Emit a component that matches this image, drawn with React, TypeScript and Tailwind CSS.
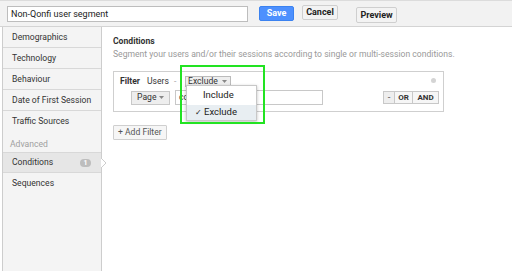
import React from "react";

const Arrow = () => (
  <svg width="5" height="3" viewBox="0 0 5 3" className="inline-block">
    <path d="M0 0 L5 0 L2.5 3 Z" fill="#888" />
  </svg>
);

export default function App() {
  const items = ["Demographics", "Technology", "Behaviour", "Date of First Session", "Traffic Sources"];
  return (
    <div
      className="relative w-[512px] h-[271px] overflow-hidden bg-white text-[#333]"
      style={{ fontFamily: "Roboto, 'Liberation Sans', Arial, sans-serif" }}
    >
      {/* top bar */}
      <div className="h-[27px] bg-[#f2f2f2] border-t border-[#dcdcdc] border-b border-b-[#d4d4d4] flex items-start">
        <div className="mt-[5px] ml-[7px] w-[241px] h-[16px] border border-[#bdbdbd] bg-white text-[9px] leading-[14px] px-[3px] text-[#222]">
          Non-Qonfi user segment
        </div>
        <button className="mt-[5px] ml-[11px] w-[35px] h-[15px] rounded-[2px] bg-[#4d90fe] border border-[#3b82f0] text-white text-[9px] font-bold leading-[13px]">
          Save
        </button>
        <button className="mt-[4px] ml-[8px] w-[36px] h-[15px] rounded-[2px] bg-[#f3f3f3] border border-[#cfcfcf] text-[#222] text-[9px] font-bold leading-[13px]">
          Cancel
        </button>
        <button className="mt-[6px] ml-[18px] w-[41px] h-[16px] rounded-[2px] bg-[#f3f3f3] border border-[#cfcfcf] text-[#222] text-[9px] font-bold leading-[14px]">
          Preview
        </button>
      </div>

      <div className="flex h-[244px]">
        {/* sidebar */}
        <div className="ml-[2px] w-[100px] bg-[#f4f4f4] border-l border-r border-[#cdcdcd] flex flex-col text-[8.6px] text-[#333] relative">
          {items.map((t, i) => (
            <div
              key={t}
              className={`h-[21px] pl-[9px] flex items-center ${i < items.length - 1 ? "border-b border-[#d8d8d8]" : ""}`}
            >
              {t}
            </div>
          ))}
          <div className="h-[20px] pl-[7px] flex items-end pb-[1px] text-[#a0a0a0]">Advanced</div>
          <div className="relative h-[21px] pl-[9px] pr-[10px] flex items-center justify-between bg-[#e6e6e6] border-t border-b border-[#d8d8d8]">
            <span>Conditions</span>
            <span className="w-[11px] h-[8px] rounded-[4px] bg-[#bdbdbd] text-white text-[7px] leading-[8px] font-bold text-center">1</span>
          </div>
          <div className="h-[21px] pl-[9px] flex items-center">Sequences</div>
        </div>
        {/* notch arrow */}
        <svg width="6" height="10" viewBox="0 0 6 10" className="absolute left-[101px] top-[158px]">
          <path d="M0 0 L5 5 L0 10" fill="#fff" stroke="#cdcdcd" strokeWidth="1" />
        </svg>

        {/* content */}
        <div className="flex-1 pl-[11px] pt-[9px]">
          <div className="text-[8.6px] font-bold text-[#333] leading-[11px]">Conditions</div>
          <div className="text-[8.6px] text-[#999] leading-[12px] mt-[1px]">
            Segment your users and/or their sessions according to single or multi-session conditions.
          </div>
          <div className="mt-[11px] w-[331px] h-[41px] border border-[#cfcfcf] relative text-[8.6px]">
            <div className="flex items-center h-[14px] mt-[2px] pl-[6px]">
              <span className="font-bold w-[27px]">Filter</span>
              <span className="w-[27px]">Users</span>
              <span className="w-[11px] text-[#aaa]">-</span>
              <span className="h-[11px] px-[2px] bg-[#eeeeee] border border-[#bbb] flex items-center gap-[4px] leading-[9px] text-[#333] w-[46px]">
                Exclude <Arrow />
              </span>
            </div>
            <div className="absolute right-[7px] top-[6px] w-[5px] h-[5px] rounded-full bg-[#d4d4d4]" />
            <div className="flex items-center mt-[2px] pl-[17px]">
              <span className="h-[14px] w-[39px] bg-[#eeeeee] border border-[#c8c8c8] flex items-center justify-between px-[5px]">
                <span>Page</span>
                <Arrow />
              </span>
              <span className="ml-[5px] h-[15px] w-[148px] border border-[#c8c8c8] bg-white px-[3px] leading-[13px] overflow-hidden whitespace-nowrap">
                com/confirmation
              </span>
              <span className="ml-auto mr-[4px] flex h-[13px] border border-[#c8c8c8] text-[8px] font-bold leading-[11px]">
                <span className="w-[11px] text-center bg-[#eee] border-r border-[#c8c8c8] text-[#666]">-</span>
                <span className="w-[18px] text-center bg-[#f6f6f6] border-r border-[#c8c8c8]">OR</span>
                <span className="w-[25px] text-center bg-[#f6f6f6]">AND</span>
              </span>
            </div>
          </div>
          <button className="mt-[13px] h-[15px] px-[4px] border border-[#cfcfcf] bg-[#f6f6f6] text-[8.6px] text-[#555] leading-[13px] rounded-[1px]">
            + Add Filter
          </button>
        </div>
      </div>

      {/* dropdown menu */}
      <div className="absolute left-[186px] top-[85px] w-[71px] h-[36px] bg-white border border-[#c8c8c8] shadow-[0_1px_3px_rgba(0,0,0,0.25)] text-[9.5px] text-[#222]">
        <div className="h-[19px] pl-[16px] flex items-center">Include</div>
        <div className="h-[15px] pl-[8px] flex items-center bg-[#e8eef2]">
          <span className="text-[8px] mr-[2px]">✓</span>Exclude
        </div>
      </div>

      {/* green highlight */}
      <div className="absolute left-[180px] top-[65px] w-[85px] h-[59px] border-2 border-[#22e322]" />
    </div>
  );
}
